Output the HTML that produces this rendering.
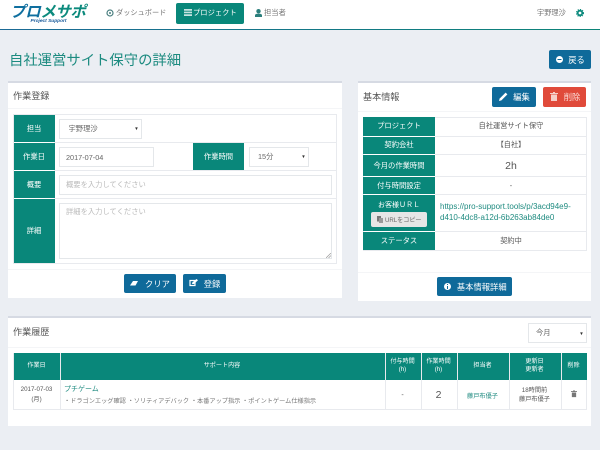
<!DOCTYPE html>
<html lang="ja"><head><meta charset="utf-8">
<style>
html,body{margin:0;padding:0}
body{width:600px;height:450px;overflow:hidden;background:#ebeef3;position:relative;font-family:"Liberation Sans","Noto Sans CJK JP",sans-serif;color:#555}
#r{position:absolute;left:0;top:0;width:600px;height:450px;filter:blur(.3px)}
.a{position:absolute;box-sizing:border-box}
.t{position:absolute;white-space:nowrap;text-align:center;display:flex;align-items:center;justify-content:center;box-sizing:border-box}
.l{justify-content:flex-start}
.g{background:#09877a;color:#fff;font-size:7.3px}
.w{background:#fff}
.b{background:#0f6a9a;color:#fff;border-radius:2px;font-size:8.3px}
.i{background:#fff;border:1px solid #e4e7ea;font-size:7.3px;color:#666;padding-left:6px}
.line{position:absolute;background:#e8eaee}
.h{font-size:6.1px;color:#fff;line-height:8.5px}
svg{display:block}
</style></head><body><div id="r">
<!-- nav -->
<div class="a w" style="left:0;top:0;width:600px;height:29px"></div>
<div class="a" style="left:0;top:28.5px;width:600px;height:1.5px;background:linear-gradient(90deg,#1b6a96,#0c8478)"></div>
<div class="t l" style="left:10px;top:3px;width:76px;height:16px;font-size:15.5px;font-weight:bold;font-style:italic;color:#0f6f9f;letter-spacing:-.4px">プロ<span style="color:#0c8a7d">メサポ</span></div>
<div class="t" style="left:27px;top:18px;width:43px;height:6px;font-size:4.8px;font-weight:bold;font-style:italic;color:#17589a">Project Support</div>
<svg class="a" style="left:106px;top:9px" width="8" height="8" viewBox="0 0 8 8"><circle cx="4" cy="4" r="3" fill="none" stroke="#4a7f80" stroke-width="1.2"/><circle cx="4" cy="4" r="1" fill="#4a7f80"/></svg>
<div class="t l" style="left:116px;top:6px;height:13px;font-size:7.2px;color:#777">ダッシュボード</div>
<div class="a" style="left:176px;top:3px;width:68px;height:20.5px;background:#09877a;border-radius:2px"></div>
<svg class="a" style="left:184px;top:9px" width="8" height="7" viewBox="0 0 8 7"><path d="M0 0h8v1.700H0zM0 2.600h8v1.700H0zM0 5.200h8v1.800H0z" fill="#c8e4e1"/></svg>
<div class="t l" style="left:193px;top:6px;height:13px;font-size:7.3px;color:#fff">プロジェクト</div>
<svg class="a" style="left:255px;top:9px" width="7" height="8" viewBox="0 0 7 8"><circle cx="3.5" cy="2.2" r="2.2" fill="#2b7f7c"/><path d="M0 8V6.3C0 5.2 1.5 4.6 3.5 4.6S7 5.2 7 6.3V8z" fill="#2b7f7c"/></svg>
<div class="t l" style="left:264px;top:6px;height:13px;font-size:7.3px;color:#777">担当者</div>
<div class="t l" style="left:537px;top:6px;height:13px;font-size:7.2px;color:#777">宇野理沙</div>
<svg class="a" style="left:576px;top:9px" width="8" height="8" viewBox="0 0 8 8"><circle cx="4" cy="4" r="2.3" fill="none" stroke="#0c8a7d" stroke-width="1.8"/><circle cx="4" cy="4" r="3.6" fill="none" stroke="#0c8a7d" stroke-width="1" stroke-dasharray="1.2 1.2"/></svg>
<!-- title -->
<div class="t l" style="left:9px;top:48px;height:22px;font-size:14.35px;color:#1c8b80">自社運営サイト保守の詳細</div>
<div class="t b" style="left:549px;top:50px;width:42px;height:19px;padding-left:13px">戻る</div>
<svg class="a" style="left:556px;top:56px" width="7" height="7" viewBox="0 0 7 7"><circle cx="3.5" cy="3.5" r="3.5" fill="#fff"/><path d="M1.500 3h4v1h-4z" fill="#0f6a9a"/></svg>

<!-- panel 1 -->
<div class="a w" style="left:8px;top:81px;width:334px;height:217px;border-top:2px solid #d6dae3"></div>
<div class="t l" style="left:13px;top:88px;height:14px;font-size:9.1px;color:#555">作業登録</div>
<div class="line" style="left:8px;top:108px;width:334px;height:1px;background:#f4f5f7"></div>
<div class="a" style="left:13px;top:114px;width:324px;height:150px;border:1px solid #e8eaee"></div>
<div class="line" style="left:54px;top:142px;width:283px;height:1px"></div>
<div class="line" style="left:54px;top:170px;width:283px;height:1px"></div>
<div class="line" style="left:54px;top:198px;width:283px;height:1px"></div>
<div class="t g" style="left:13.5px;top:115px;width:41px;height:27px">担当</div>
<div class="t g" style="left:13.5px;top:143px;width:41px;height:27px">作業日</div>
<div class="t g" style="left:13.5px;top:171px;width:41px;height:27px">概要</div>
<div class="t g" style="left:13.5px;top:199px;width:41px;height:64px">詳細</div>
<div class="t g" style="left:193px;top:143px;width:51px;height:27px">作業時間</div>
<div class="t l i" style="left:59px;top:119px;width:83px;height:20px;padding-left:8.5px">宇野理沙</div>
<div class="t" style="left:133px;top:124px;width:7px;height:8px;font-size:4.5px;color:#333">▼</div>
<div class="t l i" style="left:59px;top:147px;width:95px;height:20px">2017-07-04</div>
<div class="t l i" style="left:249px;top:147px;width:60px;height:20px;padding-left:8px">15分</div>
<div class="t" style="left:300px;top:152px;width:7px;height:8px;font-size:4.5px;color:#333">▼</div>
<div class="t l i" style="left:59px;top:175px;width:273px;height:20px;color:#bbb">概要を入力してください</div>
<div class="a i" style="left:59px;top:203px;width:273px;height:56px;color:#bbb;padding-top:2px;line-height:12px">詳細を入力してください</div>
<svg class="a" style="left:326px;top:253px" width="5" height="5" viewBox="0 0 5 5"><path d="M0 5L5 0M2.500 5L5 2.500" stroke="#999" stroke-width=".7"/></svg>
<div class="line" style="left:8px;top:269px;width:334px;height:1px;background:#f4f5f7"></div>
<div class="t b" style="left:124px;top:274px;width:52px;height:19px;padding-left:15px">クリア</div>
<svg class="a" style="left:130px;top:281px" width="8" height="5" viewBox="0 0 8 5"><path d="M3 0h5L5.500 4.500H0z" fill="#fff"/></svg>
<div class="t b" style="left:183px;top:274px;width:43px;height:19px;padding-left:15px">登録</div>
<svg class="a" style="left:189px;top:279px" width="9" height="8" viewBox="0 0 9 8"><path d="M1 1.500h5v5H1z" fill="none" stroke="#fff" stroke-width="1.200"/><path d="M3 5l.3-1.500L7.500 0 9 1.300 5 5z" fill="#fff"/></svg>

<!-- panel 2 -->
<div class="a w" style="left:358px;top:81px;width:233px;height:220px;border-top:2px solid #d6dae3"></div>
<div class="t l" style="left:363px;top:89px;height:14px;font-size:9.1px;color:#555">基本情報</div>
<div class="t b" style="left:492px;top:87px;width:44px;height:19.5px;padding-left:15px">編集</div>
<svg class="a" style="left:499px;top:92px" width="9" height="9" viewBox="0 0 9 9"><path d="M0 9l.6-2.400L6.600.6 8.400 2.400l-6 6z" fill="#fff"/></svg>
<div class="t b" style="left:543px;top:87px;width:43px;height:19.5px;padding-left:15px;background:#e04a3a;color:#fbdcd8">削除</div>
<svg class="a" style="left:550px;top:92px" width="8" height="9" viewBox="0 0 8 9"><path d="M0 1h8v1H0zM3 0h2v1H3zM1 2.500h6V9H1z" fill="#f6cfc9"/></svg>
<div class="line" style="left:358px;top:111px;width:233px;height:1px;background:#f4f5f7"></div>
<div class="a" style="left:363px;top:117px;width:224px;height:134px;border:1px solid #e8eaee"></div>
<div class="line" style="left:435px;top:136px;width:152px;height:1px"></div>
<div class="line" style="left:435px;top:154px;width:152px;height:1px"></div>
<div class="line" style="left:435px;top:176px;width:152px;height:1px"></div>
<div class="line" style="left:435px;top:194px;width:152px;height:1px"></div>
<div class="line" style="left:435px;top:231px;width:152px;height:1px"></div>
<div class="t g" style="left:363px;top:117px;width:72px;height:18.5px">プロジェクト</div>
<div class="t g" style="left:363px;top:136.500px;width:72px;height:17.500px">契約会社</div>
<div class="t g" style="left:363px;top:155px;width:72px;height:21px">今月の作業時間</div>
<div class="t g" style="left:363px;top:177px;width:72px;height:17px">付与時間設定</div>
<div class="a g" style="left:363px;top:195px;width:72px;height:36px"></div>
<div class="t" style="left:363px;top:198.500px;width:72px;height:12px;font-size:7px;color:#fff">お客様ＵＲＬ</div>
<div class="t" style="left:370.500px;top:212px;width:56.500px;height:15px;background:#e6e6e6;border-radius:2px;font-size:6.1px;color:#666;padding-left:9px">URLをコピー</div>
<svg class="a" style="left:376.500px;top:216px" width="6" height="7" viewBox="0 0 6 7"><path d="M0 0h4v5.500H0z" fill="#777"/><path d="M2 2h4v5H2z" fill="#999"/></svg>
<div class="t g" style="left:363px;top:232px;width:72px;height:18px">ステータス</div>
<div class="t" style="left:436px;top:117px;width:150px;height:18.500px;font-size:7.2px">自社運営サイト保守</div>
<div class="t" style="left:436px;top:136.500px;width:150px;height:17.500px;font-size:7.2px">【自社】</div>
<div class="t" style="left:436px;top:155px;width:150px;height:21px;font-size:10.500px">2h</div>
<div class="t" style="left:436px;top:177px;width:150px;height:17px;font-size:7.200px">-</div>
<div class="a" style="left:440px;top:202px;width:145px;font-size:8px;line-height:10.500px;color:#1f8b80;white-space:nowrap">https://pro-support.tools/p/3acd94e9-<br>d410-4dc8-a12d-6b263ab84de0</div>
<div class="t" style="left:436px;top:232px;width:150px;height:18px;font-size:7.200px">契約中</div>
<div class="line" style="left:358px;top:272px;width:233px;height:1px;background:#f4f5f7"></div>
<div class="t b" style="left:436.500px;top:277px;width:75.500px;height:19px;padding-left:15px">基本情報詳細</div>
<svg class="a" style="left:444px;top:283px" width="7" height="7" viewBox="0 0 7 7"><circle cx="3.500" cy="3.500" r="3.500" fill="#fff"/><path d="M3 1h1v1H3zM3 3h1v3H3z" fill="#0f6a9a"/></svg>

<!-- history -->
<div class="a w" style="left:8px;top:316px;width:583px;height:110px;border-top:2px solid #d6dae3"></div>
<div class="t l" style="left:13px;top:324px;height:14px;font-size:9.100px;color:#555">作業履歴</div>
<div class="t l i" style="left:528px;top:323px;width:59px;height:20px;padding-left:7px;border-width:1.500px">今月</div>
<div class="t" style="left:578px;top:329px;width:7px;height:8px;font-size:4.500px;color:#333">▼</div>
<div class="line" style="left:8px;top:347px;width:583px;height:1px;background:#f4f5f7"></div>
<div class="a" style="left:13px;top:353px;width:574px;height:57px;border:1px solid #e8eaee"></div>
<div class="a" style="left:13.500px;top:353px;width:573px;height:26.500px;background:#09877a"></div>
<div class="line" style="left:59.500px;top:353px;width:1px;height:57px"></div>
<div class="line" style="left:384.500px;top:353px;width:1px;height:57px"></div>
<div class="line" style="left:420.500px;top:353px;width:1px;height:57px"></div>
<div class="line" style="left:456.500px;top:353px;width:1px;height:57px"></div>
<div class="line" style="left:508.500px;top:353px;width:1px;height:57px"></div>
<div class="line" style="left:560.500px;top:353px;width:1px;height:57px"></div>
<div class="t h" style="left:14px;top:353px;width:45px;height:26px">作業日</div>
<div class="t h" style="left:60px;top:353px;width:324px;height:26px">サポート内容</div>
<div class="t h" style="left:385px;top:353px;width:35px;height:26px">付与時間<br>(h)</div>
<div class="t h" style="left:421px;top:353px;width:35px;height:26px">作業時間<br>(h)</div>
<div class="t h" style="left:457px;top:353px;width:51px;height:26px">担当者</div>
<div class="t h" style="left:509px;top:353px;width:51px;height:26px">更新日<br>更新者</div>
<div class="t h" style="left:561px;top:353px;width:25px;height:26px">削除</div>
<div class="t" style="left:14px;top:381px;width:45px;height:28px;font-size:6.200px;line-height:10px;color:#555">2017-07-03<br>(月)</div>
<div class="t l" style="left:64px;top:383px;height:12px;font-size:7px;color:#1f8b80">プチゲーム</div>
<div class="t l" style="left:64px;top:395px;height:11px;font-size:6.200px;color:#777">・ドラゴンエッグ確認 ・ソリティアデバック ・本番アップ指示 ・ポイントゲーム仕様指示</div>
<div class="t" style="left:385px;top:381px;width:35px;height:28px;font-size:7px">-</div>
<div class="t" style="left:421px;top:381px;width:35px;height:28px;font-size:10.500px">2</div>
<div class="t" style="left:457px;top:381px;width:51px;height:28px;font-size:6.200px;color:#1f8b80">藤戸布優子</div>
<div class="t" style="left:509px;top:381px;width:51px;height:28px;font-size:6.200px;line-height:9.500px">18時間前<br>藤戸布優子</div>
<svg class="a" style="left:570.500px;top:390px" width="6" height="7.500" viewBox="0 0 7 8"><path d="M0 1h7v1H0zM2.500 0h2v1h-2zM1 2.500h5V8H1z" fill="#777"/></svg>
</div></body></html>
